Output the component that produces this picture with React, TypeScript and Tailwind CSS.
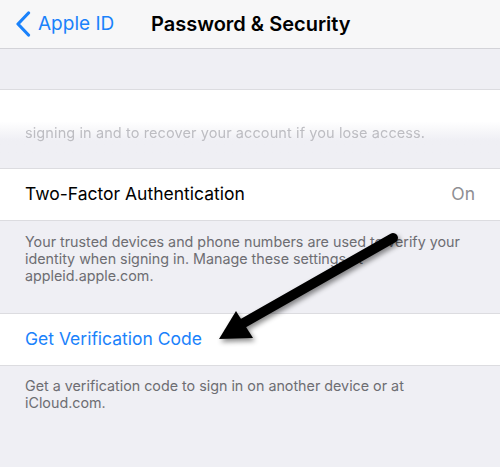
export default function App() {
  return (
    <div
      className="relative w-[500px] h-[467px] overflow-hidden bg-[#efeff4]"
      style={{ fontFamily: 'Inter, "Noto Sans", sans-serif' }}
    >
      {/* Nav bar */}
      <div className="h-[49px] flex items-center bg-[#f7f7f8] border-b border-[#d3d3d8]">
        <div className="flex items-center w-[151px] pl-[15px] text-[#1a82fb]">
          <svg width="16" height="26" viewBox="0 0 16 26" className="shrink-0">
            <path d="M13.5 2 L3 13 L13.5 24" fill="none" stroke="currentColor" strokeWidth="3.2" strokeLinecap="round" strokeLinejoin="round" />
          </svg>
          <span className="ml-[7px] text-[19px]">Apple ID</span>
        </div>
        <span className="text-[20px] font-semibold text-black">Password &amp; Security</span>
      </div>

      {/* Gray gap */}
      <div className="h-[41px] border-b border-[#dcdce0]" />

      {/* Faded scrolled content */}
      <div className="h-[78px] bg-gradient-to-b from-white from-[40%] to-[#efeff4] to-[65%] pt-[32px] pl-[25px]">
        <p className="text-[14.5px] text-[#bdbdc2] blur-[0.4px] tracking-[0.1px]">
          signing in and to recover your account if you lose access.
        </p>
      </div>

      {/* Two-Factor row */}
      <div className="h-[53px] bg-white border-y border-[#dcdce0] flex items-center justify-between pl-[25px] pr-[25px]">
        <span className="text-[17.5px] text-black">Two-Factor Authentication</span>
        <span className="text-[17.5px] text-[#8e8e93]">On</span>
      </div>

      {/* Description */}
      <div className="h-[92px] pt-[12px] pl-[25px] pr-[20px]">
        <p className="text-[14.3px] leading-[17px] text-[#6d6d72]">
          Your trusted devices and phone numbers are used to verify your identity when signing in. Manage these settings at appleid.apple.com.
        </p>
      </div>

      {/* Get Verification Code row */}
      <div className="h-[53px] bg-white border-y border-[#dcdce0] flex items-center pl-[25px]">
        <span className="text-[17.5px] text-[#1a82fb]">Get Verification Code</span>
      </div>

      {/* Footer description */}
      <div className="pt-[11px] pl-[25px] pr-[60px]">
        <p className="text-[14.3px] leading-[17px] text-[#6d6d72]">
          Get a verification code to sign in on another device or at iCloud.com.
        </p>
      </div>

      {/* Annotation arrow */}
      <svg className="absolute left-0 top-0 pointer-events-none" width="500" height="467" viewBox="0 0 500 467">
        <defs>
          <filter id="sh" x="-20%" y="-20%" width="140%" height="140%">
            <feDropShadow dx="2" dy="3" stdDeviation="2.5" floodColor="#000" floodOpacity="0.45" />
          </filter>
        </defs>
        <g filter="url(#sh)">
          <line x1="393" y1="238" x2="240" y2="325" stroke="#000" strokeWidth="10" strokeLinecap="round" />
          <polygon points="219,339 236,311 253,338" fill="#000" />
        </g>
      </svg>
    </div>
  );
}
